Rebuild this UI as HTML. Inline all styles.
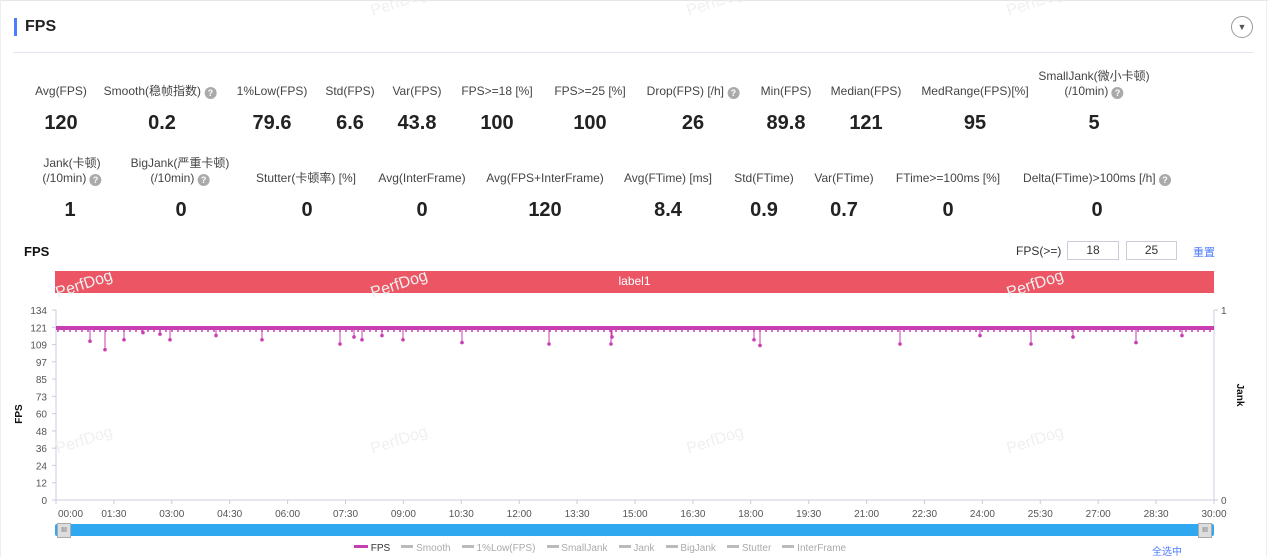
<!DOCTYPE html>
<html><head><meta charset="utf-8"><style>
*{margin:0;padding:0;box-sizing:border-box}
body{width:1268px;height:557px;background:#fff;font-family:"Liberation Sans","Noto Sans CJK SC",sans-serif;position:relative;overflow:hidden;color:#333}
.a{position:absolute;white-space:nowrap}
.l{font-size:12px;color:#444;transform:translateX(-50%);text-align:center;line-height:15px}
.v{font-size:20px;font-weight:bold;color:#222;transform:translateX(-50%)}
.q{display:inline-block;width:12px;height:12px;border-radius:50%;background:#aaa;color:#fff;font-size:9px;line-height:12px;text-align:center;font-weight:bold;vertical-align:-1px}
.wm{position:absolute;color:#f0f0f0;font-size:16px;transform:rotate(-18deg)}
</style></head><body>
<div class="a" style="left:0;top:0;width:1268px;height:1px;background:#e6e6e6"></div>
<div class="a" style="left:1266px;top:0;width:1px;height:557px;background:#eee"></div>
<div class="a" style="left:0;top:0;width:1px;height:557px;background:#eee"></div>
<div class="wm" style="left:370px;top:-6px">PerfDog</div>
<div class="wm" style="left:686px;top:-6px">PerfDog</div>
<div class="wm" style="left:1006px;top:-6px">PerfDog</div>
<div class="a" style="left:14px;top:18px;width:3px;height:18px;background:#4d7cfe"></div>
<div class="a" style="left:25px;top:18px;font-size:16px;font-weight:bold;color:#222">FPS</div>
<div class="a" style="left:1231px;top:16px;width:22px;height:22px;border:1px solid #999;border-radius:50%;font-size:9px;text-align:center;line-height:20px;color:#555">▼</div>
<div class="a" style="left:13px;top:52px;width:1240px;height:1px;background:#e3e6ee"></div>

<div class="a l" style="left:61px;top:84px">Avg(FPS)</div>
<div class="a l" style="left:160px;top:84px">Smooth(稳帧指数) <span class="q">?</span></div>
<div class="a l" style="left:272px;top:84px">1%Low(FPS)</div>
<div class="a l" style="left:350px;top:84px">Std(FPS)</div>
<div class="a l" style="left:417px;top:84px">Var(FPS)</div>
<div class="a l" style="left:497px;top:84px">FPS&gt;=18 [%]</div>
<div class="a l" style="left:590px;top:84px">FPS&gt;=25 [%]</div>
<div class="a l" style="left:693px;top:84px">Drop(FPS) [/h] <span class="q">?</span></div>
<div class="a l" style="left:786px;top:84px">Min(FPS)</div>
<div class="a l" style="left:866px;top:84px">Median(FPS)</div>
<div class="a l" style="left:975px;top:84px">MedRange(FPS)[%]</div>
<div class="a l" style="left:1094px;top:69px">SmallJank(微小卡顿)<br>(/10min) <span class="q">?</span></div>
<div class="a v" style="left:61px;top:112px">120</div>
<div class="a v" style="left:162px;top:112px">0.2</div>
<div class="a v" style="left:272px;top:112px">79.6</div>
<div class="a v" style="left:350px;top:112px">6.6</div>
<div class="a v" style="left:417px;top:112px">43.8</div>
<div class="a v" style="left:497px;top:112px">100</div>
<div class="a v" style="left:590px;top:112px">100</div>
<div class="a v" style="left:693px;top:112px">26</div>
<div class="a v" style="left:786px;top:112px">89.8</div>
<div class="a v" style="left:866px;top:112px">121</div>
<div class="a v" style="left:975px;top:112px">95</div>
<div class="a v" style="left:1094px;top:112px">5</div>

<div class="a l" style="left:72px;top:156px">Jank(卡顿)<br>(/10min) <span class="q">?</span></div>
<div class="a l" style="left:180px;top:156px">BigJank(严重卡顿)<br>(/10min) <span class="q">?</span></div>
<div class="a l" style="left:306px;top:171px">Stutter(卡顿率) [%]</div>
<div class="a l" style="left:422px;top:171px">Avg(InterFrame)</div>
<div class="a l" style="left:545px;top:171px">Avg(FPS+InterFrame)</div>
<div class="a l" style="left:668px;top:171px">Avg(FTime) [ms]</div>
<div class="a l" style="left:764px;top:171px">Std(FTime)</div>
<div class="a l" style="left:844px;top:171px">Var(FTime)</div>
<div class="a l" style="left:948px;top:171px">FTime&gt;=100ms [%]</div>
<div class="a l" style="left:1097px;top:171px">Delta(FTime)&gt;100ms [/h] <span class="q">?</span></div>
<div class="a v" style="left:70px;top:199px">1</div>
<div class="a v" style="left:181px;top:199px">0</div>
<div class="a v" style="left:307px;top:199px">0</div>
<div class="a v" style="left:422px;top:199px">0</div>
<div class="a v" style="left:545px;top:199px">120</div>
<div class="a v" style="left:668px;top:199px">8.4</div>
<div class="a v" style="left:764px;top:199px">0.9</div>
<div class="a v" style="left:844px;top:199px">0.7</div>
<div class="a v" style="left:948px;top:199px">0</div>
<div class="a v" style="left:1097px;top:199px">0</div>

<div class="a" style="left:24px;top:244px;font-size:13px;font-weight:bold;color:#111">FPS</div>
<div class="a" style="left:1016px;top:244px;font-size:12px;color:#333">FPS(&gt;=)</div>
<div class="a" style="left:1067px;top:241px;width:52px;height:19px;border:1px solid #ccd;font-size:12px;text-align:center;line-height:17px">18</div>
<div class="a" style="left:1126px;top:241px;width:51px;height:19px;border:1px solid #ccd;font-size:12px;text-align:center;line-height:17px">25</div>
<div class="a" style="left:1193px;top:244px;font-size:11px;color:#4d7cfe">重置</div>
<div class="a" style="left:55px;top:271px;width:1159px;height:22px;background:#ec5664;color:#fff;font-size:12px;text-align:center;line-height:21px">label1</div>

<svg class="a" style="left:0;top:300px" width="1268" height="257" id="s"></svg>
<div class="a" style="left:55px;top:524px;width:1159px;height:12px;background:#2fa8f0;border-radius:2px"></div>
<div class="a" style="left:57px;top:523px;width:14px;height:15px;background:#ddd;border:1px solid #aaa;font-size:7px;text-align:center;line-height:13px;color:#666">III</div>
<div class="a" style="left:1198px;top:523px;width:14px;height:15px;background:#ddd;border:1px solid #aaa;font-size:7px;text-align:center;line-height:13px;color:#666">III</div>
<div class="a" style="left:354px;top:543px;font-size:10px;color:#aaa">
<span style="display:inline-block;width:14px;height:3px;background:#c83fb3;vertical-align:3px"></span> <span style="color:#333">FPS</span>&nbsp;&nbsp;&nbsp;
<span style="display:inline-block;width:12px;height:3px;background:#bbb;vertical-align:3px"></span> Smooth&nbsp;&nbsp;&nbsp;
<span style="display:inline-block;width:12px;height:3px;background:#bbb;vertical-align:3px"></span> 1%Low(FPS)&nbsp;&nbsp;&nbsp;
<span style="display:inline-block;width:12px;height:3px;background:#bbb;vertical-align:3px"></span> SmallJank&nbsp;&nbsp;&nbsp;
<span style="display:inline-block;width:12px;height:3px;background:#bbb;vertical-align:3px"></span> Jank&nbsp;&nbsp;&nbsp;
<span style="display:inline-block;width:12px;height:3px;background:#bbb;vertical-align:3px"></span> BigJank&nbsp;&nbsp;&nbsp;
<span style="display:inline-block;width:12px;height:3px;background:#bbb;vertical-align:3px"></span> Stutter&nbsp;&nbsp;&nbsp;
<span style="display:inline-block;width:12px;height:3px;background:#bbb;vertical-align:3px"></span> InterFrame</div>
<div class="a" style="left:1152px;top:543px;font-size:10px;color:#4d7cfe">全选中</div>
<div class="wm" style="left:55px;top:276px">PerfDog</div>
<div class="wm" style="left:370px;top:276px">PerfDog</div>
<div class="wm" style="left:1006px;top:276px">PerfDog</div>
<div class="wm" style="left:55px;top:432px">PerfDog</div>
<div class="wm" style="left:370px;top:432px">PerfDog</div>
<div class="wm" style="left:686px;top:432px">PerfDog</div>
<div class="wm" style="left:1006px;top:432px">PerfDog</div>
<script>
var s=document.getElementById('s'),h='';
var y0=200,lab=[0,12,24,36,48,60,73,85,97,109,121,134];
h+='<line x1="56" y1="10" x2="56" y2="200" stroke="#ccd" />';
h+='<line x1="56" y1="200" x2="1214" y2="200" stroke="#ccd" />';
h+='<line x1="1214" y1="10" x2="1214" y2="200" stroke="#ccd" />';
h+='<text x="1221" y="14" font-size="10" fill="#555">1</text><text x="1221" y="204" font-size="10" fill="#555">0</text>';
h+='<line x1="1214" y1="10" x2="1218" y2="10" stroke="#ccd"/><line x1="1214" y1="200" x2="1218" y2="200" stroke="#ccd"/>';
for(var i=0;i<12;i++){var y=y0-i*190/11;h+='<text x="47" y="'+(y+4)+'" text-anchor="end" font-size="10" fill="#555">'+lab[i]+'</text><line x1="52" y1="'+y+'" x2="56" y2="'+y+'" stroke="#ccd"/>';}
var t=['00:00','01:30','03:00','04:30','06:00','07:30','09:00','10:30','12:00','13:30','15:00','16:30','18:00','19:30','21:00','22:30','24:00','25:30','27:00','28:30','30:00'];
for(i=0;i<21;i++){var x=56+i*1158/20;h+='<line x1="'+x+'" y1="200" x2="'+x+'" y2="204" stroke="#ccd"/><text x="'+(i==0?58:x)+'" y="217" text-anchor="'+(i==0?'start':'middle')+'" font-size="10" fill="#555">'+t[i]+'</text>';}
h+='<text transform="translate(22,114) rotate(-90)" font-size="10" font-weight="bold" fill="#111" text-anchor="middle">FPS</text>';
h+='<text transform="translate(1237,95) rotate(90)" font-size="10" font-weight="bold" fill="#111" text-anchor="middle">Jank</text>';
h+='<rect x="56" y="26" width="1158" height="4" fill="#c83fb3"/>';
var sp=[[90,112],[105,106],[124,113],[143,118],[160,117],[170,113],[216,116],[262,113],[340,110],[354,115],[362,113],[382,116],[403,113],[462,111],[549,110],[611,110],[612,115],[760,109],[754,113],[900,110],[980,116],[1031,110],[1073,115],[1136,111],[1182,116]];
for(i=0;i<sp.length;i++){var x=sp[i][0],yy=y0-sp[i][1]*190/134;h+='<line x1="'+x+'" y1="30" x2="'+x+'" y2="'+yy+'" stroke="#c83fb3"/><circle cx="'+x+'" cy="'+yy+'" r="1.8" fill="#c83fb3"/>';}
for(x=58;x<1214;x+=6){h+='<circle cx="'+x+'" cy="31" r="1" fill="#c83fb3"/>';}
s.innerHTML=h;
</script>
</body></html>
